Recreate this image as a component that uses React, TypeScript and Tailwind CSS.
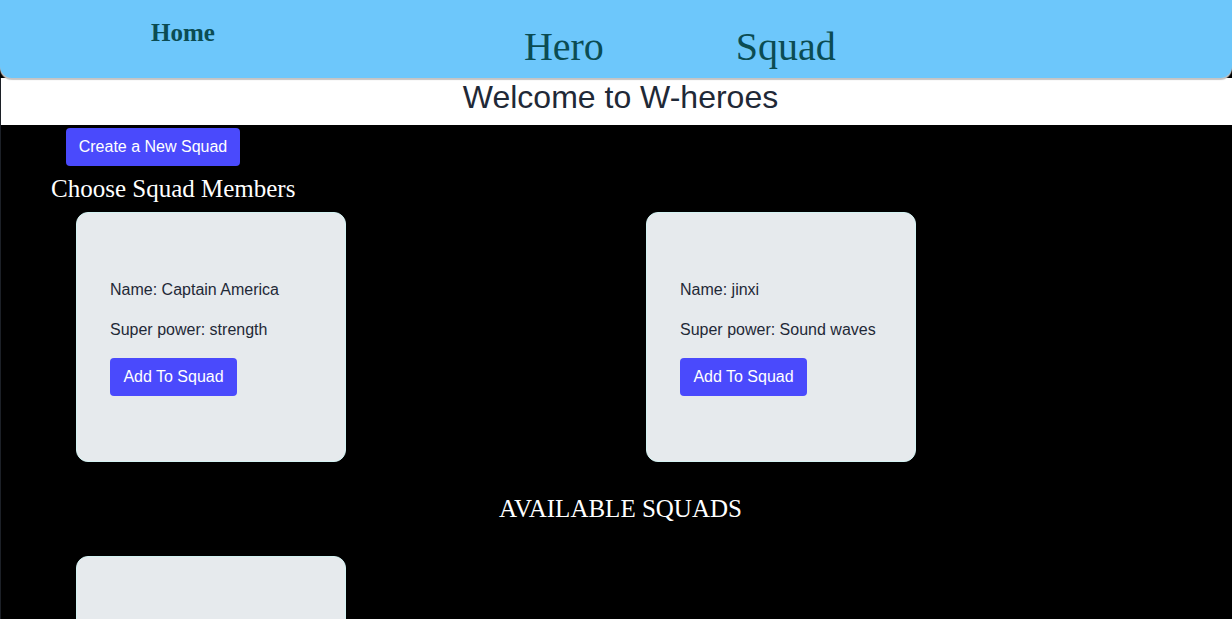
import React from "react";

const heroes = [
  { name: "Captain America", power: "strength" },
  { name: "jinxi", power: "Sound waves" },
];

const serif = { fontFamily: '"Liberation Serif", "Times New Roman", serif' };

function HeroCard({ name, power }: { name: string; power: string }) {
  return (
    <div className="w-[270px] h-[250px] shrink-0 rounded-xl border border-[#d3f3f3] bg-[#e6eaed] px-[33px] pt-[65px] flex flex-col text-[#1f2937] text-base">
      <p className="leading-6">Name: {name}</p>
      <p className="leading-6 mt-4">Super power: {power}</p>
      <div className="mt-4">
        <button className="h-[38px] w-[127px] rounded bg-[#4a4afc] text-white leading-6 text-center">
          Add To Squad
        </button>
      </div>
    </div>
  );
}

export default function App() {
  return (
    <div
      className="min-h-[619px] bg-black overflow-hidden"
      style={{ fontFamily: '"Liberation Sans", Arial, sans-serif' }}
    >
      {/* Navbar */}
      <nav
        className="relative z-10 h-[78px] bg-[#6dc7fb] rounded-b-xl shadow-[0_2px_1px_#c4c4c4] flex items-start text-[#0b4c53]"
        style={serif}
      >
        <a className="ml-[151px] mt-[19px] text-[25px] leading-[28px] font-bold">Home</a>
        <a className="ml-[309px] mt-[24px] text-[40px] leading-[46px]">Hero</a>
        <a className="ml-[132px] mt-[24px] text-[40px] leading-[46px]">Squad</a>
      </nav>

      {/* Welcome */}
      <div className="h-[47px] bg-white border-l border-[#1c2027] pl-2 text-center">
        <h1 className="pt-[1px] text-[32px] leading-[37px] text-[#1f2937]">
          Welcome to W-heroes
        </h1>
      </div>

      {/* Body */}
      <div className="border-l border-[#1c2027] pb-10">
        <button className="ml-[65px] mt-[3px] h-[38px] w-[174px] rounded bg-[#4a4afc] text-white leading-6 text-center">
          Create a New Squad
        </button>
        <h2 className="ml-[50px] mt-[9px] text-[25px] leading-[28px] text-white" style={serif}>
          Choose Squad Members
        </h2>
        <div className="mt-[9px] pl-[75px] flex gap-[300px]">
          {heroes.map((h) => (
            <HeroCard key={h.name} name={h.name} power={h.power} />
          ))}
        </div>
        <h2
          className="mt-[33px] pl-2 text-center text-[25px] leading-[28px] text-white"
          style={serif}
        >
          AVAILABLE SQUADS
        </h2>
        <div className="mt-[33px] pl-[75px]">
          <div className="w-[270px] h-[250px] rounded-xl border border-[#d3f3f3] bg-[#e6eaed]" />
        </div>
      </div>
    </div>
  );
}
